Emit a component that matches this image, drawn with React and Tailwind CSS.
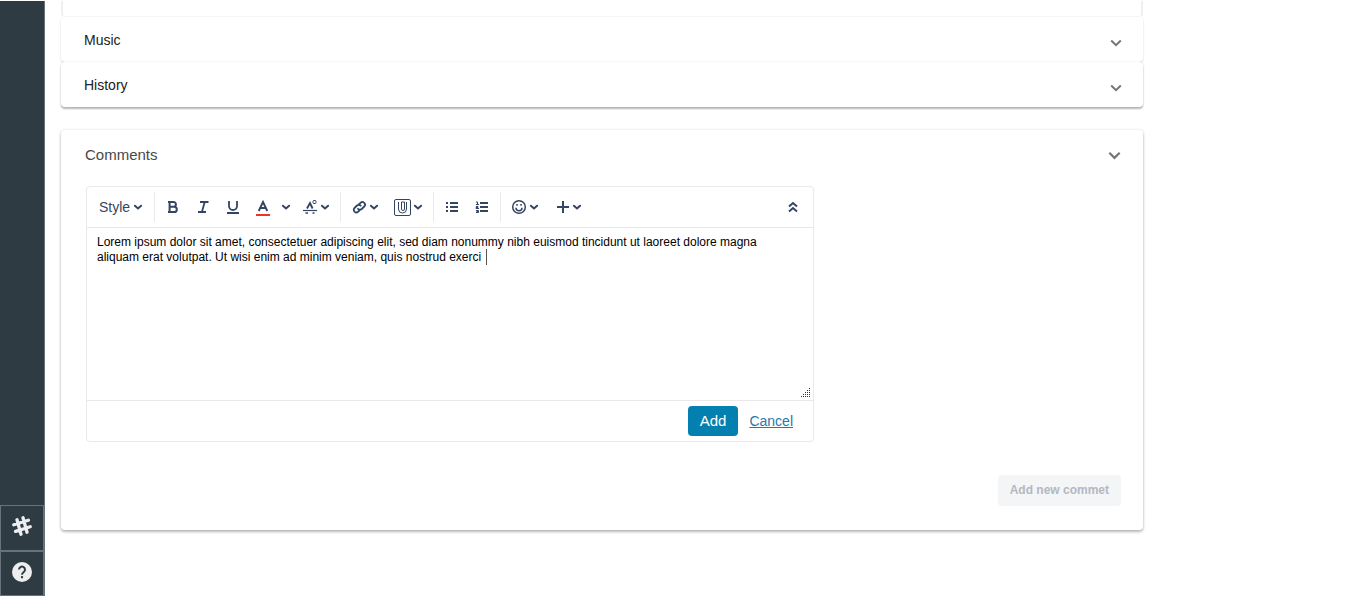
import { useState } from "react";

const SECTIONS = ["Music", "History"];

const DRAFT =
  "Lorem ipsum dolor sit amet, consectetuer adipiscing elit, sed diam nonummy nibh euismod tincidunt ut laoreet dolore magna aliquam erat volutpat. Ut wisi enim ad minim veniam, quis nostrud exerci ";

export default function App() {
  return (
    <div className="flex h-screen overflow-hidden bg-white pt-px font-['Liberation_Sans',Arial,sans-serif]">
      <Sidebar />
      <main className="min-w-0 flex-1 px-4">
        <div className="max-w-[1082px]">
          <section>
            <div className="flex h-4 flex-col justify-end overflow-hidden rounded-b border-x-2 border-b border-x-[#f0f0f0] border-b-[#f7f7f7]">
              <div className="flex h-11 shrink-0 items-center justify-end pr-5">
                <SectionChevron />
              </div>
            </div>
            {SECTIONS.map((name) => (
              <SectionRow key={name} name={name} />
            ))}
          </section>
          <Comments />
        </div>
      </main>
    </div>
  );
}

function Sidebar() {
  return (
    <aside className="flex w-[45px] shrink-0 flex-col justify-end border-r border-[#67737a] bg-[#2f3b43]">
      <button aria-label="Channels" className="flex h-[46px] items-center justify-center border border-[#67737a] pb-1 text-[#eceeef]">
        <svg width="20" height="20" viewBox="0 0 20 20" fill="none" stroke="currentColor" strokeWidth="3.3" strokeLinecap="round">
          <path d="M5 3.8l4 14.4M11 1.8l4 14.4M1.8 8.8l14.6-4.6M3.6 15.4l14.6-4.6" />
        </svg>
      </button>
      <button aria-label="Help" className="flex h-[45px] items-center justify-center border border-[#67737a] pb-1">
        <svg width="20" height="20" viewBox="0 0 20 20" fill="none">
          <circle cx="10" cy="10" r="10" fill="#eceeef" />
          <path d="M7 7.6a3 3 0 1 1 4.8 2.4c-1.1.8-1.8 1.3-1.8 2.7" stroke="#2f3b43" strokeWidth="2" />
          <path d="M10 14.1v2.1" stroke="#2f3b43" strokeWidth="2.1" />
        </svg>
      </button>
    </aside>
  );
}

function SectionRow({ name }) {
  return (
    <button className="flex h-[45px] w-full items-center justify-between rounded bg-white pr-[21px] pl-[23px] text-sm text-[#212121] shadow-[0_1px_2px_rgba(0,0,0,0.18)] last:shadow-[0_2px_2px_rgba(0,0,0,0.28),0_0_2px_rgba(0,0,0,0.1)]">
      <span>{name}</span>
      <span className="pt-1.5">
        <SectionChevron />
      </span>
    </button>
  );
}

function Comments() {
  return (
    <section className="mt-[23px] rounded bg-white px-[22px] pb-6 shadow-[0_2px_3px_rgba(0,0,0,0.26),0_0_3px_rgba(0,0,0,0.12)]">
      <header className="flex h-[51px] items-center justify-between pl-0.5">
        <h2 className="text-[15px] text-[#484848]">Comments</h2>
        <SectionChevron large />
      </header>
      <div className="pt-[5px] pl-[3px]">
        <Editor />
      </div>
      <div className="mt-[33px] flex justify-end">
        <button disabled className="h-[31px] rounded-sm bg-[#f4f5f7] px-3 pb-0.5 text-xs font-bold text-[#b3b8c2]">
          Add new commet
        </button>
      </div>
    </section>
  );
}

function Editor() {
  const [text, setText] = useState(DRAFT);

  return (
    <div className="max-w-[728px] rounded-sm border border-[#e9e9ec]">
      <Toolbar />
      <div className="relative h-[172px]">
        <textarea
          aria-label="Comment"
          value={text}
          onChange={(e) => setText(e.target.value)}
          className="block h-full w-full resize-none pt-[7px] pr-10 pl-2.5 text-xs leading-[15px] text-black outline-none"
        />
        <span className="absolute top-[21px] left-[399px] h-4 w-px bg-[#555]" />
        <svg className="absolute right-0.5 bottom-0.5" width="10" height="10" viewBox="0 0 10 10" stroke="#333" strokeDasharray="1 1">
          <path d="M0 8.5h10M2 6.5h8M4 4.5h6M6 2.5h4M8 .5h2" />
        </svg>
      </div>
      <div className="flex h-[41px] items-center justify-end gap-[11px] border-t border-[#e9e9ec] pr-5">
        <button className="h-[30px] rounded-sm bg-[#0380b0] px-3 text-[15px] text-white">Add</button>
        <a href="#cancel" className="text-sm text-[#2878a8] underline">
          Cancel
        </a>
      </div>
    </div>
  );
}

function Toolbar() {
  return (
    <div className="flex h-[41px] items-center border-b border-[#e9e9ec] text-[#344563]">
      <button className="flex h-8 w-[67px] items-center gap-[3px] pl-3 text-sm">
        Style
        <Chevron />
      </button>
      <Divider />
      <div className="flex items-center pr-2.5 pl-[3px]">
        <Tool label="Bold">
          <svg width="14" height="14" viewBox="0 0 14 14" fill="none" stroke="currentColor" strokeWidth="2">
            <path d="M2 2h5.5a2.4 2.4 0 0 1 0 4.8H3M3 6.8h5.2a2.6 2.6 0 0 1 0 5.2H2M3.6 2v10" />
          </svg>
        </Tool>
        <Tool label="Italic">
          <svg width="14" height="14" viewBox="0 0 14 14" fill="none" stroke="currentColor" strokeWidth="1.8">
            <path d="M4 2h8.5M2 12h8M8.7 2L5.9 12" />
          </svg>
        </Tool>
        <Tool label="Underline">
          <svg width="14" height="14" viewBox="0 0 14 14" fill="none" stroke="currentColor" strokeWidth="1.8">
            <path d="M3 1v5a4 4 0 0 0 8 0V1M1 13h12" />
          </svg>
        </Tool>
        <Tool label="Text color">
          <svg width="14" height="18" viewBox="0 0 14 18" fill="none">
            <path d="M2.7 13L7 4l4.3 9M4.2 10h5.6" stroke="currentColor" strokeWidth="1.9" />
            <path d="M0 17h14" stroke="#ee3425" strokeWidth="2" />
          </svg>
        </Tool>
        <button aria-label="More colors" className="flex h-8 w-4 items-center justify-center">
          <Chevron />
        </button>
        <MenuTool label="More formatting" className="ml-2">
          <svg width="16" height="16" viewBox="0 0 16 16" fill="none" stroke="currentColor">
            <path d="M5 9.5L8 4l2.6 5.500" strokeWidth="1.9" />
            <path d="M1 11.5h14" strokeWidth="1.2" />
            <path d="M3.5 14h2.5M10.5 14h2" strokeWidth="1.6" />
            <rect x="11" y="1.5" width="3" height="3" rx="1" />
          </svg>
        </MenuTool>
      </div>
      <Divider />
      <div className="flex items-center gap-[15px] pr-2.5 pl-[11px]">
        <MenuTool label="Link">
          <svg width="15" height="16" viewBox="0 0 15 16" fill="none" stroke="currentColor" strokeWidth="1.8" strokeLinecap="round">
            <path d="M6 9.8a2.6 2.6 0 0 0 3.7.2l2.5-2.5a2.6 2.6 0 0 0-3.7-3.7L7.3 5" />
            <path d="M8.7 6.7a2.6 2.6 0 0 0-3.7-.2L2.5 9a2.6 2.6 0 0 0 3.7 3.7l1.2-1.2" />
          </svg>
        </MenuTool>
        <MenuTool label="Attachment">
          <svg width="17" height="17" viewBox="0 0 17 17" fill="none" stroke="currentColor">
            <rect x=".5" y=".5" width="16" height="16" rx="1.5" />
            <path d="M4.5 3v7a4 4 0 0 0 8 0V3M10.5 10V3h-3v7a1.500 1.500 0 0 0 3 0" />
          </svg>
        </MenuTool>
      </div>
      <Divider />
      <div className="flex items-center px-[3px]">
        <Tool label="Bullet list">
          <svg width="14" height="12" viewBox="0 0 14 12" stroke="currentColor" strokeWidth="2">
            <path d="M1 2h2M1 6h2M1 10h2M5 2h8M5 6h8M5 10h8" />
          </svg>
        </Tool>
        <Tool label="Numbered list">
          <svg width="14" height="12" viewBox="0 0 14 12" fill="none" stroke="currentColor">
            <path d="M5 2h8M5 6h8M5 10h8" strokeWidth="2" />
            <path d="M1 1h1.5v2.5M1 3.5h3M1 5.5h2v1H1v1h3M1 9.5h2.5v2H1M1.5 10.5h2" />
          </svg>
        </Tool>
      </div>
      <Divider />
      <div className="flex items-center gap-[17px] pl-2.5">
        <MenuTool label="Emoji">
          <svg width="16" height="16" viewBox="0 0 16 16" fill="none" stroke="currentColor" strokeWidth="1.5">
            <circle cx="8" cy="8" r="6.3" />
            <path d="M5 8.8a3 3 0 0 0 6 0" />
            <path d="M6 5v1.8M10 5v1.8" />
          </svg>
        </MenuTool>
        <MenuTool label="Insert">
          <svg width="14" height="14" viewBox="0 0 14 14" stroke="currentColor" strokeWidth="2">
            <path d="M7 1v12M1 7h12" />
          </svg>
        </MenuTool>
      </div>
      <button aria-label="Collapse toolbar" className="mr-[15px] ml-auto">
        <svg width="10" height="12" viewBox="0 0 10 12" fill="none" stroke="currentColor" strokeWidth="2">
          <path d="M1 5.5L5 2l4 3.5M1 10.5L5 7l4 3.5" />
        </svg>
      </button>
    </div>
  );
}

function Tool({ label, children }) {
  return (
    <button aria-label={label} className="flex h-8 w-[30px] items-center justify-center">
      {children}
    </button>
  );
}

function MenuTool({ label, className = "", children }) {
  return (
    <button aria-label={label} className={`flex h-8 items-center gap-0.5 ${className}`}>
      {children}
      <Chevron />
    </button>
  );
}

function Divider() {
  return <span className="h-[30px] w-px bg-[#e9e9ec]" />;
}

function Chevron() {
  return (
    <svg width="10" height="10" viewBox="0 0 10 10" fill="none" stroke="currentColor" strokeWidth="2" strokeLinecap="round">
      <path d="M1.9 3.7L5 6.5l3.1-2.8" />
    </svg>
  );
}

function SectionChevron({ large }) {
  return (
    <svg width={large ? 13 : 12} height={large ? 13 : 12} viewBox="0 0 12 12" fill="none" stroke="#757575" strokeWidth="2">
      <path d="M1.2 3.5L6 8.2l4.8-4.7" />
    </svg>
  );
}
